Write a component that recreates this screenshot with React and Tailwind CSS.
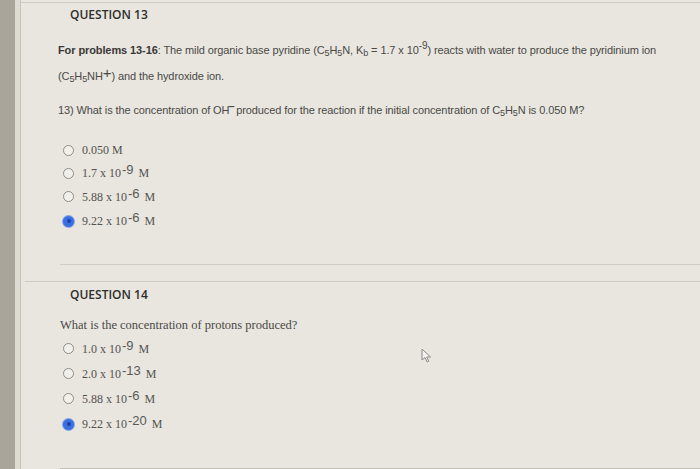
import React from 'react';

const sans = { fontFamily: '"Liberation Sans", Arial, sans-serif' };
const serif = { fontFamily: '"Liberation Serif", "Times New Roman", serif' };

function Radio({ checked }) {
  if (checked) {
    return (
      <span className="flex h-[11px] w-[11px] items-center justify-center rounded-full bg-[#3a6fe0] shadow-[0_0_0_1px_#8aa5e6]">
        <span className="h-[4px] w-[4px] rounded-full bg-[#1e3fae]" />
      </span>
    );
  }
  return <span className="block h-[11px] w-[11px] rounded-full border border-[#8f8d88] bg-[#f1f0eb]" />;
}

// Option text: serif number with a sans superscript exponent
function Option({ base, exp, checked, h = 'h-[23px]' }) {
  return (
    <div className={`flex items-center ${h} pl-[42px]`}>
      <Radio checked={checked} />
      <span className="ml-[8px] text-[12px] text-[#55534f]" style={serif}>
        {base}
        {exp && (
          <sup className="relative -top-[3px] ml-[1px] mr-[2px] text-[13px] text-[#5a5955]" style={sans}>{exp}</sup>
        )}
        {exp ? ' M' : ''}
      </span>
    </div>
  );
}

function Sub({ children }) {
  return <sub className="text-[9px]">{children}</sub>;
}

export default function App() {
  return (
    <div className="flex h-[469px] w-[700px] overflow-hidden bg-[#e8e6df]">
      <div className="w-[15px] shrink-0 bg-[#a9a59b]" />
      <div className="w-[6px] shrink-0 border-r border-[#c8c5bc] bg-[#dedbd3]" />
      <div className="flex flex-1 flex-col">
        <div className="mt-[2px] h-[1px] bg-[#cfccc4]" />

        {/* Question 13 */}
        <div className="flex h-[26px] items-center pl-[49px] text-[12px] font-semibold text-[#2e2d2b]" style={{ fontFamily: '"Open Sans", sans-serif' }}>
          QUESTION 13
        </div>
        <div className="pl-[37px] pt-[15px] text-[11px] tracking-[-0.1px] text-[#4a4946]" style={sans}>
          <div className="h-[20px]">
            <span className="font-bold text-[#3a3937]">For problems 13-16</span>: The mild organic base pyridine (C<Sub>5</Sub>H<Sub>5</Sub>N, K<Sub>b</Sub> = 1.7 x 10<sup className="text-[10px]">-9</sup>) reacts with water to produce the pyridinium ion
          </div>
          <div className="mt-[6px] h-[20px]">
            (C<Sub>5</Sub>H<Sub>5</Sub>NH<sup className="relative -top-[2px] text-[15px]">+</sup>) and the hydroxide ion.
          </div>
          <div className="mt-[14px] h-[20px]">
            13) What is the concentration of OH<sup className="relative top-[2px] text-[12px] font-bold">‾</sup> produced for the reaction if the initial concentration of C<Sub>5</Sub>H<Sub>5</Sub>N is 0.050 M?
          </div>
        </div>

        <div className="mt-[17px]">
          <Option base="0.050 M" />
          <Option base="1.7 x 10" exp="-9" />
          <Option base="5.88 x 10" exp="-6" h="h-[24px]" />
          <Option base="9.22 x 10" exp="-6" checked h="h-[25px]" />
        </div>

        <div className="ml-[39px] mt-[30px] h-[1px] bg-[#cfccc4]" />
        <div className="ml-[4px] mt-[16px] h-[1px] bg-[#cfccc4]" />

        {/* Question 14 */}
        <div className="mt-[2px] flex h-[26px] items-center pl-[49px] text-[12px] font-semibold text-[#2e2d2b]" style={{ fontFamily: '"Open Sans", sans-serif' }}>
          QUESTION 14
        </div>
        <div className="mt-[9px] pl-[39px] text-[12.5px] text-[#4a4946]" style={serif}>
          What is the concentration of protons produced?
        </div>

        <div className="relative mt-[1px]">
          <Option base="1.0 x 10" exp="-9" h="h-[25px]" />
          <Option base="2.0 x 10" exp="-13" h="h-[25px]" />
          <Option base="5.88 x 10" exp="-6" h="h-[25px]" />
          <Option base="9.22 x 10" exp="-20" checked h="h-[26px]" />
          {/* mouse cursor */}
          <svg className="absolute left-[400px] top-[12px]" width="11" height="15" viewBox="0 0 11 15">
            <path d="M1 1 L1 12 L4 9.5 L6.2 14 L7.8 13.2 L5.7 9 L9.5 9 Z" fill="#f4f3ef" stroke="#8a8985" strokeWidth="1" strokeLinejoin="round" />
          </svg>
        </div>

        <div className="ml-[39px] mt-[31px] h-[1px] bg-[#c4c1b8]" />
      </div>
    </div>
  );
}
